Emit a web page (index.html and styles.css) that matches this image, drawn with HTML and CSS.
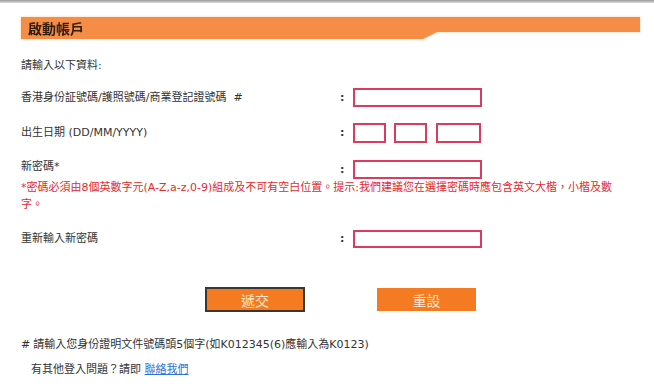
FILE: index.html
```html
<!DOCTYPE html>
<html lang="zh-Hant">
<head>
<meta charset="utf-8">
<title>啟動帳戶</title>
<link rel="stylesheet" href="styles.css">
</head>
<body>
<div class="topline"></div>
<div class="page">
  <div class="header-wrap">
    <div class="header"><span class="header-title">啟動帳戶</span></div>
  </div>
  <p class="intro">請輸入以下資料:</p>

  <div class="row row-id">
    <div class="label">香港身份証號碼/護照號碼/商業登記證號碼 &nbsp;#</div>
    <div class="colon">:</div>
    <div class="field"><input class="inp inp-wide" type="text"></div>
  </div>

  <div class="row row-dob">
    <div class="label">出生日期 (DD/MM/YYYY)</div>
    <div class="colon">:</div>
    <div class="field dob">
      <input class="inp inp-dd" type="text">
      <input class="inp inp-mm" type="text">
      <input class="inp inp-yy" type="text">
    </div>
  </div>

  <div class="row row-pw">
    <div class="label label-pw">新密碼*</div>
    <div class="colon">:</div>
    <div class="field"><input class="inp inp-wide" type="password"></div>
  </div>
  <p class="note">*密碼必須由8個英數字元(A-Z,a-z,0-9)組成及不可有空白位置。提示:我們建議您在選擇密碼時應包含英文大楷，小楷及數字。</p>

  <div class="row row-pw2">
    <div class="label">重新輸入新密碼</div>
    <div class="colon">:</div>
    <div class="field"><input class="inp inp-wide inp-short" type="password"></div>
  </div>

  <div class="buttons">
    <button class="btn btn-submit" type="button">遞交</button>
    <button class="btn btn-reset" type="button">重設</button>
  </div>

  <p class="foot"><span class="hash">#</span>請輸入您身份證明文件號碼頭5個字(如K012345(6)應輸入為K0123)</p>
  <p class="help">有其他登入問題？請即 <a class="link" href="#">聯絡我們</a></p>
</div>
</body>
</html>
```
FILE: styles.css
```css
html, body {
  margin: 0;
  padding: 0;
  background: #ffffff;
}

body {
  font-family: "DejaVu Sans", "Noto Sans CJK TC", sans-serif;
  font-size: 11px;
  color: #333333;
}

.topline {
  height: 3px;
  background: linear-gradient(#9a9a9a, #dcdcdc);
}

.page {
  padding: 0 14px 0 21px;
}

.header-wrap {
  margin-top: 14px;
  filter: drop-shadow(0 0 1px #fcc796);
}

.header {
  height: 22px;
  background: #f68d47;
  clip-path: polygon(0 0, 100% 0, 100% 15px, 416px 15px, 402px 22px, 0 22px);
  display: flex;
  align-items: center;
  padding-left: 7px;
}

.header-title {
  font-family: "Noto Sans CJK TC", sans-serif;
  font-weight: 700;
  font-size: 14px;
  color: #2e1d10;
  line-height: 22px;
}

.intro {
  margin: 19px 0 0;
  line-height: 16px;
}

.row {
  display: grid;
  grid-template-columns: 317px 15px auto;
  align-items: center;
}

.row-id { margin-top: 14px; }
.row-dob { margin-top: 16px; }
.row-pw { margin-top: 17px; }
.row-pw2 { margin-top: 17px; }

.label {
  line-height: 16px;
  white-space: nowrap;
}

.label-pw {
  align-self: start;
  margin-top: -1px;
}

.colon {
  padding-left: 2px;
  font-weight: 700;
  font-size: 11px;
  line-height: 16px;
}

.field {
  display: flex;
}

.dob {
  gap: 8px;
}

.inp {
  box-sizing: border-box;
  height: 19px;
  margin: 0;
  padding: 0 3px;
  border: 2px solid #da3b5e;
  background: #ffffff;
  outline: none;
}

.inp-wide { width: 129px; }
.inp-short { height: 18px; }

.inp-dd, .inp-mm { width: 33px; height: 20px; }
.inp-yy { width: 45px; height: 20px; margin-left: 1px; }

.note {
  margin: 0;
  max-width: 601px;
  font-size: 11px;
  color: #e52a2c;
  line-height: 17px;
}

.buttons {
  display: flex;
  align-items: center;
  margin: 39px 0 0 184px;
  gap: 72px;
}

.btn {
  font-family: "Noto Sans CJK TC", sans-serif;
  font-size: 14px;
  color: #fde6d2;
  background: #f47b22;
  margin: 0;
  padding: 0;
  cursor: pointer;
}

.btn-submit {
  width: 100px;
  height: 25px;
  border: 2px solid #3b3631;
}

.btn-reset {
  width: 99px;
  height: 23px;
  border: none;
}

.foot {
  margin: 25px 0 0;
  line-height: 16px;
}

.hash {
  margin-right: 3px;
}

.help {
  margin: 9px 0 0 10px;
  line-height: 16px;
}

.link {
  color: #2f72d6;
  text-decoration: underline;
}
```
